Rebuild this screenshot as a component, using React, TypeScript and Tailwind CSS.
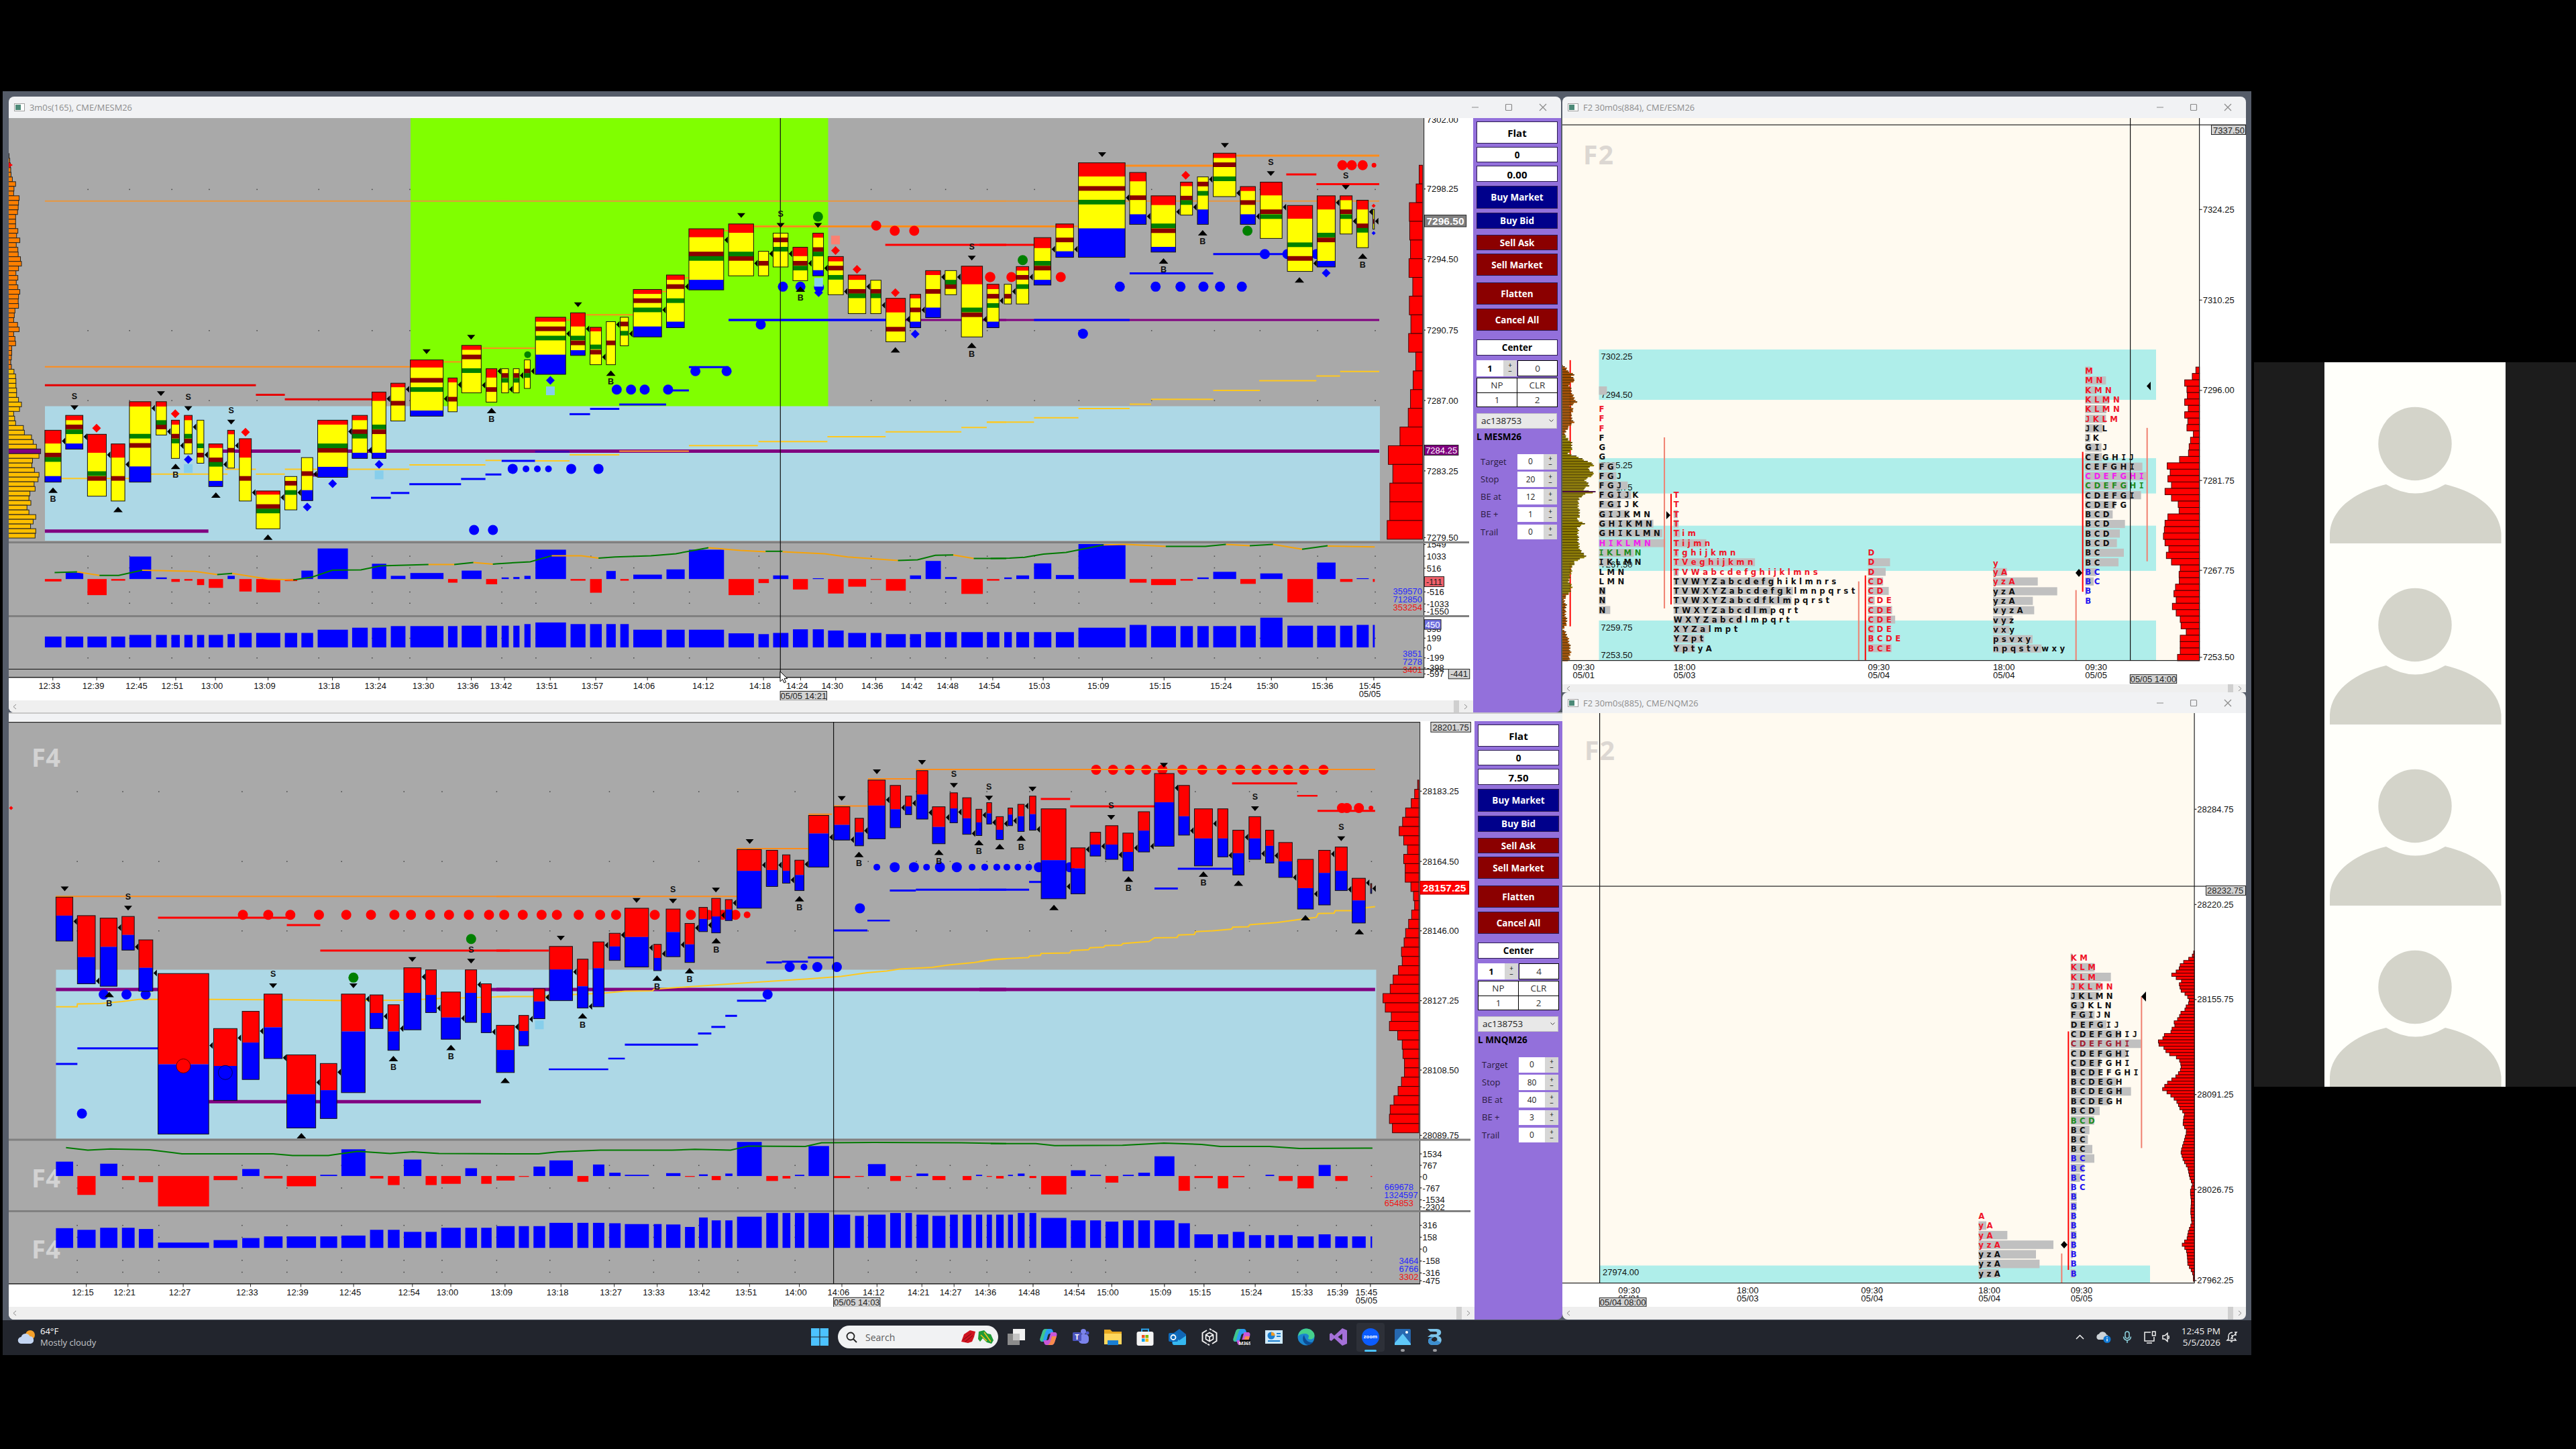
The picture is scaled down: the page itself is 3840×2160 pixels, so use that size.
import React from 'react'

interface Frame {
  x0: number
  y0: number
  kx: number
  ky: number
}

// every series is stored in the units of its own strip, these bring it to screen pixels
const A: Frame = { x0: 0, y0: 130, kx: 2.0632, ky: 1.6681 }
const B: Frame = { x0: 740, y0: 130, kx: 2.0632, ky: 1.6681 }
const C: Frame = { x0: 1460, y0: 130, kx: 1.7818, ky: 1.6681 }
const D: Frame = { x0: 0, y0: 1060, kx: 2.0632, ky: 1.6333 }
const E: Frame = { x0: 740, y0: 1060, kx: 2.0632, ky: 1.6333 }
const F: Frame = { x0: 1460, y0: 1060, kx: 1.7818, ky: 1.6333 }
const G: Frame = { x0: 2320, y0: 130, kx: 2.6133, ky: 1.686 }
const H: Frame = { x0: 2860, y0: 500, kx: 3, ky: 2.8 }
const I: Frame = { x0: 2860, y0: 1380, kx: 3, ky: 2.45 }

const px = (f: Frame, v: number) => f.x0 + v / f.kx
const py = (f: Frame, v: number) => f.y0 + v / f.ky

const SANS = '"Liberation Sans", Arial, sans-serif'
const UI = '"Open Sans", "Noto Sans", sans-serif'

/* ---------- drawing primitives ---------- */

const Box = ({ f, x1, x2, y1, y2, fill, stroke }: any) => (
  <rect
    x={px(f, x1)}
    y={py(f, Math.min(y1, y2))}
    width={(x2 - x1) / f.kx}
    height={Math.abs(y2 - y1) / f.ky}
    fill={fill}
    stroke={stroke}
    strokeWidth={stroke ? 1 : 0}
  />
)

// x1, x2, y, colour, width
type Level = [number, number, number, string, number?]

const Levels = ({ f, data }: { f: Frame; data: Level[] }) => (
  <>
    {data.map(([x1, x2, y, c, w = 2], i) => (
      <line key={i} x1={px(f, x1)} x2={px(f, x2)} y1={py(f, y)} y2={py(f, y)} stroke={c} strokeWidth={w} />
    ))}
  </>
)

const Poly = ({ f, pts, color }: { f: Frame; pts: number[]; color: string }) => {
  const out: string[] = []
  for (let i = 0; i < pts.length; i += 2) out.push(px(f, pts[i]).toFixed(1) + ',' + py(f, pts[i + 1]).toFixed(1))
  return <polyline points={out.join(' ')} fill="none" stroke={color} strokeWidth={2} />
}

const Label = ({ f, x, y, children, size = 13, fill = '#111', anchor = 'start', bold }: any) => (
  <text
    x={px(f, x)}
    y={py(f, y) + size * 0.36}
    fontSize={size}
    fill={fill}
    textAnchor={anchor}
    fontWeight={bold ? 700 : 400}
    fontFamily={SANS}
  >
    {children}
  </text>
)

const Tag = ({ f, x1, x2, y1, y2, fill, color = '#222', stroke = '#222', size = 13, bold, children }: any) => (
  <>
    <Box f={f} x1={x1} x2={x2} y1={y1} y2={y2} fill={fill} stroke={stroke} />
    <Label f={f} x={(x1 + x2) / 2} y={(y1 + y2) / 2} size={size} fill={color} bold={bold} anchor="middle">
      {children}
    </Label>
  </>
)

const Arrow = ({ x, y }: { x: number; y: number }) => (
  <polygon points={`${x},${y} ${x + 5},${y - 5} ${x + 5},${y + 5}`} fill="#000" />
)

// d = down triangle, u = up triangle; a letter after it adds the S / B text
type Mark = [string, number, number]

const Marks = ({ f, data }: { f: Frame; data: Mark[] }) => (
  <>
    {data.map(([kind, x, y], i) => {
      const cx = px(f, x)
      const cy = py(f, y)
      const k = kind[0]
      if (k === 'd')
        return (
          <g key={i}>
            <polygon points={`${cx - 6},${cy - 3} ${cx + 6},${cy - 3} ${cx},${cy + 4}`} />
            {kind[1] && <Label f={f} x={x} y={y - 28} size={12.5} bold anchor="middle">S</Label>}
          </g>
        )
      if (k === 'u')
        return (
          <g key={i}>
            <polygon points={`${cx - 7},${cy + 4} ${cx + 7},${cy + 4} ${cx},${cy - 4}`} />
            {kind[1] && <Label f={f} x={x} y={y + 21} size={12.5} bold anchor="middle">B</Label>}
          </g>
        )
      const c = { r: '#f00', b: '#00f', g: '#008000', l: '#87ceeb', s: '#fa8072' }[kind[1]]
      if (k === 'q') return <rect key={i} x={cx - 6.5} y={cy - 6.5} width={13} height={13} fill={c} />
      if (k === 'm' || k === 'n') {
        const s = k === 'm' ? 6.5 : 3
        return <polygon key={i} points={`${cx - s},${cy} ${cx},${cy - s} ${cx + s},${cy} ${cx},${cy + s}`} fill={c} />
      }
      return <circle key={i} cx={cx} cy={cy} r={k === 'c' ? 7.5 : k === 'e' ? 5 : 3.5} fill={c} />
    })}
  </>
)

const circles = (kind: string, y: number, xs: number[]): Mark[] => xs.map((x) => [kind, x, y])

const Dots = ({ f, xs, ys }: { f: Frame; xs: number[]; ys: number[] }) => (
  <>
    {xs.map((x) => ys.map((y) => <rect key={x + '-' + y} x={px(f, x)} y={py(f, y)} width={1.5} height={1.5} fill="#444" />))}
  </>
)

const Times = ({ f, y, tick, data }: { f: Frame; y: number; tick: number; data: [string, number][] }) => (
  <>
    {data.map(([t, x]) => (
      <g key={t}>
        <Label f={f} x={x} y={y} anchor="middle">
          {t}
        </Label>
        <Box f={f} x1={x + 9.5} x2={x + 11.5} y1={tick} y2={tick + 8} fill="#222" />
      </g>
    ))}
  </>
)

/* ---------- MESM26 ---------- */

// x1, x2, high, low, red end, green, dark red, blue start, close, delta, volume
const MES: [Frame, number[][]][] = [
  [A, [
    [138, 188, 853, 982, 886, 920, 909, 967, 880, 1229, 1366],
    [202, 255, 816, 900, 828, 851, 839, 886, 869, 1207, 1366],
    [269, 327, 863, 1017, 909, 955, 967, 0, 914, 1263, 1366],
    [342, 384, 887, 1029, 921, 0, 967, 0, 938, 1227, 1366],
    [398, 464, 782, 982, 794, 862, 885, 943, 798, 1167, 1362],
    [480, 512, 782, 865, 794, 828, 839, 0, 856, 1219, 1362],
    [527, 552, 828, 923, 839, 874, 862, 0, 891, 1230, 1362],
    [567, 591, 816, 912, 828, 862, 874, 0, 845, 1227, 1362],
    [606, 627, 828, 935, 0, 886, 909, 0, 914, 1238, 1362],
    [642, 685, 887, 993, 897, 932, 921, 979, 938, 1245, 1362],
    [700, 721, 853, 947, 863, 0, 897, 0, 891, 1215, 1360],
    [736, 773, 874, 1029, 921, 0, 967, 0, 1008, 1254, 1357],
    [788, 861, 1004, 1098, 1013, 1048, 1037, 0, 1020, 1256, 1357],
    [876, 913, 968, 1051, 0, 1002, 979, 0, 1008, 1228, 1357],
    [927, 962, 921, 1028, 0, 0, 955, 1002, 962, 1202, 1357],
    [977, 1069, 828, 970, 839, 886, 897, 944, 856, 1147, 1349],
    [1083, 1130, 816, 923, 828, 862, 851, 909, 903, 0, 1344],
    [1144, 1187, 758, 923, 780, 839, 851, 909, 775, 1185, 1344],
    [1202, 1246, 736, 830, 746, 0, 780, 0, 751, 1215, 1340],
    [1262, 1363, 678, 818, 697, 746, 723, 804, 775, 1208, 1340],
    [1378, 1406, 723, 807, 734, 0, 770, 0, 740, 1232, 1340],
    [1420, 1480, 642, 760, 653, 699, 665, 0, 741, 1202, 1339],
    [1495, 1528, 700, 783, 722, 0, 746, 0, 706, 1236, 1339],
  ]],
  [B, [
    [16, 37, 700, 760, 0, 723, 711, 0, 751, 1219, 1339],
    [52, 70, 700, 760, 0, 723, 711, 0, 717, 1218, 1339],
    [86, 104, 678, 749, 0, 711, 700, 0, 706, 1215, 1335],
    [120, 213, 572, 714, 583, 618, 595, 665, 613, 1150, 1331],
    [228, 273, 561, 667, 595, 618, 630, 654, 601, 1227, 1335],
    [288, 323, 597, 690, 607, 640, 653, 0, 671, 1257, 1335],
    [338, 366, 583, 690, 0, 0, 630, 0, 590, 1203, 1335],
    [381, 406, 572, 643, 0, 606, 583, 0, 613, 1227, 1335],
    [421, 508, 503, 621, 514, 548, 525, 595, 554, 1212, 1349],
    [523, 578, 467, 598, 479, 525, 490, 583, 496, 1199, 1349],
    [592, 699, 352, 504, 373, 420, 409, 479, 380, 1150, 1349],
    [714, 791, 340, 469, 362, 409, 420, 0, 438, 1263, 1358],
    [806, 837, 408, 469, 0, 0, 432, 0, 414, 1233, 1360],
    [851, 897, 363, 447, 0, 397, 374, 0, 414, 1214, 1357],
    [912, 957, 398, 481, 420, 444, 432, 0, 438, 1249, 1348],
    [973, 1006, 363, 469, 374, 409, 398, 455, 450, 1221, 1348],
    [1020, 1067, 421, 516, 433, 467, 444, 0, 508, 1259, 1351],
    [1082, 1136, 467, 563, 479, 513, 502, 0, 496, 1242, 1357],
    [1151, 1183, 480, 563, 0, 513, 502, 0, 542, 1225, 1357],
    [1198, 1258, 525, 633, 560, 0, 596, 0, 577, 1252, 1360],
    [1272, 1305, 515, 598, 525, 0, 548, 583, 554, 1214, 1360],
    [1320, 1366, 456, 573, 467, 0, 502, 548, 472, 1178, 1355],
    [1380, 1415, 456, 516, 0, 479, 490, 0, 472, 1218, 1355],
    [1430, 1495, 445, 621, 490, 548, 560, 0, 577, 1260, 1355],
  ]],
  [C, [
    [20, 52, 490, 598, 502, 537, 514, 583, 531, 1227, 1355],
    [66, 85, 490, 539, 0, 0, 514, 0, 508, 1219, 1355],
    [98, 131, 446, 539, 456, 490, 467, 0, 472, 1214, 1355],
    [145, 190, 374, 492, 400, 432, 444, 479, 403, 1184, 1355],
    [203, 250, 340, 423, 350, 0, 374, 408, 403, 1213, 1355],
    [263, 387, 188, 423, 222, 280, 246, 351, 275, 1136, 1344],
    [399, 443, 212, 341, 234, 0, 269, 316, 321, 1232, 1337],
    [456, 521, 270, 410, 293, 339, 351, 397, 310, 1238, 1340],
    [534, 566, 236, 318, 246, 281, 270, 0, 298, 1227, 1340],
    [579, 608, 223, 341, 0, 258, 235, 304, 229, 1219, 1340],
    [621, 681, 164, 272, 176, 222, 187, 0, 263, 1205, 1340],
    [693, 733, 247, 341, 258, 0, 281, 316, 321, 1235, 1339],
    [746, 804, 236, 376, 269, 316, 304, 0, 298, 1209, 1319],
    [818, 885, 294, 458, 327, 386, 420, 0, 438, 1281, 1339],
    [897, 945, 270, 447, 304, 362, 374, 432, 287, 1182, 1339],
    [958, 990, 270, 365, 281, 316, 304, 0, 333, 1230, 1339],
    [1002, 1033, 281, 399, 304, 350, 339, 0, 310, 1221, 1337],
    [1045, 1049, 304, 353, 0, 0, 328, 0, 333, 1230, 1337],
  ]],
]

const OR = '#ff8c1a'
const YE = '#ffc81e'
const PU = '#800080'

const MES_LEVELS: [Frame, Level[]][] = [
  [A, [
    [138, 1568, 283, '#e8973f'], [138, 1262, 695, OR], [1363, 1420, 683, OR], [1480, 1568, 649, OR],
    [138, 787, 741, '#e60000', 3], [787, 876, 765, '#e60000', 3], [876, 1144, 776, '#e60000', 3],
    [685, 924, 905, PU, 5], [955, 977, 964, PU, 5], [1069, 1568, 905, PU, 5], [138, 641, 1104, PU, 5],
    [138, 398, 973, YE], [464, 700, 962, YE], [693, 787, 950, YE], [787, 876, 962, YE], [876, 1259, 950, YE],
    [1259, 1493, 939, YE], [1493, 1542, 928, YE],
    [1141, 1202, 1021, '#00f', 3], [1202, 1259, 1009, '#00f', 3], [1259, 1418, 987, '#00f', 3],
    [1418, 1493, 974, '#00f', 3], [1493, 1542, 963, '#00f', 3],
  ]],
  [B, [
    [0, 1568, 283, '#e8973f'], [0, 1568, 905, PU, 5], [119, 225, 906, '#3a00b0', 3],
    [16, 119, 929, '#00f', 3], [119, 225, 929, YE], [225, 378, 914, YE], [378, 592, 905, '#ff9f30'],
    [592, 804, 891, YE], [806, 1018, 881, YE], [1018, 1197, 869, YE], [1197, 1430, 857, YE], [1430, 1508, 846, YE], [1508, 1568, 833, YE],
    [225, 288, 813, '#00f', 3], [288, 378, 800, '#00f', 3], [378, 522, 789, '#00f', 3], [522, 592, 754, '#00f', 3],
    [592, 714, 696, '#00f', 3], [714, 1198, 579, '#00f', 3.5], [1198, 1568, 579, PU, 3],
    [0, 120, 649, OR], [213, 228, 579, OR], [273, 421, 566, OR], [508, 523, 508, OR], [578, 592, 474, OR], [699, 714, 357, OR],
    [791, 1568, 346, OR, 3], [1196, 1568, 392, '#f00', 3],
  ]],
  [C, [
    [0, 1062, 283, '#e8973f'], [0, 1062, 905, PU, 5], [0, 1062, 579, PU, 3], [145, 399, 579, '#00f', 3],
    [0, 203, 346, OR, 3], [250, 263, 346, OR], [387, 621, 195, OR, 3], [681, 1062, 170, OR, 3],
    [0, 145, 392, '#f00', 3], [815, 895, 217, '#f00', 3], [895, 1062, 241, '#f00', 3],
    [399, 621, 463, '#00f', 3], [621, 897, 415, '#00f', 3],
    [20, 145, 833, YE], [145, 263, 822, YE], [263, 399, 799, YE], [399, 456, 788, YE], [456, 621, 776, YE],
    [621, 745, 754, YE], [743, 895, 730, YE], [895, 958, 718, YE], [958, 1062, 707, YE],
  ]],
]

const MES_MARKS: [Frame, Mark[]][] = [
  [A, [
    ['dS', 229, 796], ['d', 495, 761], ['dS', 579, 798], ['dS', 711, 832], ['d', 1312, 657], ['d', 1449, 621],
    ['uB', 163, 1002], ['u', 363, 1050], ['uB', 540, 943], ['u', 664, 1014], ['u', 824, 1119], ['uB', 1512, 804],
    ['mr', 297, 848], ['mr', 539, 812], ['mr', 755, 858], ['mb', 579, 926], ['mb', 945, 1044], ['mb', 1023, 986], ['mb', 1166, 938],
    ['ql', 579, 948], ['ql', 1166, 964], ...circles('cb', 1101, [1458, 1516]),
  ]],
  [B, [
    ['cb', 881, 496], ['cb', 935, 496], ['cb', 992, 497],
    ['d', 251, 540], ['d', 753, 318], ['dS', 874, 343], ['d', 989, 343], ['dS', 1462, 424],
    ['uB', 352, 711], ['uB', 935, 502], ['u', 1227, 653], ['uB', 1462, 642],
    ['mb', 166, 729], ['ql', 166, 755], ['mb', 991, 511], ['ql', 991, 485], ['mr', 1043, 406], ['qs', 1043, 380],
    ['mr', 1109, 453], ['mr', 1227, 511], ['mb', 1288, 614],
    ...circles('cb', 949, [50, 230, 314]), ...circles('eb', 949, [91, 126, 160]), ...circles('cb', 752, [370, 414, 456, 528]),
    ...circles('cb', 706, [612, 708]), ['cb', 813, 590], ['eg', 96, 665], ['cg', 989, 322],
    ['cr', 1168, 344], ['cr', 1225, 357], ['cr', 1285, 357], ['cr', 1518, 472],
  ]],
  [C, [
    ['d', 326, 167], ['d', 652, 144], ['dS', 774, 214], ['dS', 973, 248],
    ['uB', 489, 432], ['uB', 593, 362], ['u', 850, 479], ['uB', 1018, 420],
    ['mr', 548, 219], ['mb', 921, 462], ['nr', 1047, 295], ['nb', 1047, 363],
    ...circles('cr', 472, [29, 216]), ...circles('cr', 194, [964, 989, 1018]), ['tr', 1048, 194],
    ['cg', 115, 430], ['cg', 712, 357], ...circles('cb', 496, [373, 468, 534, 595, 639, 697]), ['cb', 275, 613],
  ]],
]

const MES_LEFT = [
  28, 30, 32, 33, 34, 38, 48, 43, 42, 59, 57, 56, 54, 48, 48, 48, 55, 51, 61, 50, 55, 56, 63, 66, 57, 49, 55, 50, 55, 61,
  57, 56, 57, 46, 44, 42, 54, 59, 42, 46, 48, 36, 36, 35, 33, 35, 43, 48, 49, 49, 51, 51, 57, 66, 60, 42, 45, 48, 72, 75,
  97, 102, 112, 125, 120, 100, 98, 106, 120, 117, 105, 108, 92, 89, 95, 83, 89, 110, 102, 94, 110, 108,
]

const MES_RIGHT = [
  1168, 1160, 1142, 1143, 1145, 1141, 1151, 1142, 1146, 1140, 1159, 1152, 1145, 1139, 1117, 1086, 1098, 1090, 1090, 1083,
]

const GR = '#007a00'
const OL = '#f5a30a'
const MES_CUM: [Frame, string, number[]][] = [
  [A, GR, [168, 1207, 237, 1205]],
  [A, OL, [237, 1205, 306, 1214]],
  [A, GR, [306, 1214, 365, 1214, 437, 1201]],
  [A, OL, [437, 1201, 600, 1204, 668, 1212]],
  [A, GR, [668, 1212, 714, 1209]],
  [A, OL, [714, 1209, 824, 1223, 902, 1225]],
  [A, GR, [902, 1225, 960, 1218, 1022, 1201, 1110, 1200, 1170, 1190, 1318, 1187]],
  [A, OL, [1318, 1187, 1397, 1187]],
  [A, GR, [1397, 1187, 1456, 1182]],
  [A, OL, [1456, 1182, 1516, 1186]],
  [B, GR, [-11, 1186, 0, 1185, 104, 1180, 170, 1165]],
  [B, OL, [170, 1165, 262, 1165, 314, 1171]],
  [B, GR, [314, 1171, 365, 1168, 475, 1165, 552, 1160, 652, 1145]],
  [B, OL, [652, 1145, 750, 1152, 828, 1155]],
  [B, GR, [828, 1154, 880, 1154]],
  [B, OL, [880, 1155, 1010, 1160, 1080, 1168, 1235, 1177]],
  [B, GR, [1235, 1177, 1295, 1175, 1350, 1164, 1405, 1163]],
  [B, OL, [1405, 1163, 1468, 1172]],
  [B, GR, [1468, 1172, 1568, 1172]],
  [C, GR, [30, 1172, 80, 1171, 120, 1169, 170, 1161, 230, 1157, 330, 1138]],
  [C, OL, [330, 1138, 390, 1137, 495, 1142]],
  [C, GR, [495, 1142, 600, 1142, 655, 1137]],
  [C, OL, [655, 1137, 718, 1140]],
  [C, GR, [718, 1140, 780, 1137]],
  [C, OL, [780, 1137, 857, 1149]],
  [C, GR, [857, 1149, 925, 1140]],
  [C, OL, [925, 1141, 1050, 1143]],
]

const MesChart = () => (
  <svg width={2183} height={868} viewBox="13 176 2183 868" className="block">
    <rect x={13} y={176} width={2109} height={834} fill="#a9a9a9" />
    <rect x={612} y={176} width={622.5} height={430} fill="#80ff00" />
    <rect x={67} y={605.5} width={1990} height={200.5} fill="#add8e6" />
    <Dots f={A} xs={[269, 397, 527, 642, 789, 979, 1143, 1259]} ys={[253, 604, 778, 1165, 1194, 1254, 1282, 1369, 1418]} />
    <Dots f={B} xs={[15, 120, 289, 421, 592, 806]} ys={[1165, 1194, 1254, 1282, 1369, 1418]} />
    <Dots f={B} xs={[1151, 1271, 1380, 1508]} ys={[253, 604, 778, 1165, 1194, 1254, 1282, 1369, 1418]} />
    <Dots f={C} xs={[145, 263, 456, 623, 744, 897, 1050]} ys={[253, 604, 778, 1165, 1194, 1254, 1282, 1369, 1418]} />

    {MES_LEFT.map((e, i) => (
      <Box key={i} f={A} x1={24} x2={e} y1={165 + i * 11.66} y2={176.6 + i * 11.66}
        fill={i === 63 ? PU : i < 46 ? '#ff7f00' : '#ffbf00'} stroke="#222" />
    ))}
    <polygon points="13,242 19,246 13,250" fill="#f00" />
    {MES_RIGHT.map((s, i) => (
      <Box key={i} f={C} x1={s} x2={1177} y1={194 + i * 46.5} y2={240.5 + i * 46.5} fill="#f00" stroke="#400" />
    ))}
    {MES_LEVELS.map(([f, data], i) => (
      <Levels key={i} f={f} data={data} />
    ))}
    <Marks f={C} data={[...circles('cb', 415, [758, 818, 895]), ['cr', 85, 472]]} />
    {MES.map(([f, rows]) =>
      rows.map(([x1, x2, hi, lo, red, green, dark, blue, close, delta, vol]) => (
        <g key={f.x0 + '-' + x1}>
          <Box f={f} x1={x1} x2={x2} y1={hi} y2={lo} fill="#ff0" />
          {red > 0 && <Box f={f} x1={x1} x2={x2} y1={hi} y2={red} fill="#f00" />}
          {dark > 0 && <Box f={f} x1={x1} x2={x2} y1={dark} y2={dark + 11.5} fill="#8b0000" />}
          {green > 0 && <Box f={f} x1={x1} x2={x2} y1={green} y2={green + 11.5} fill="#008000" />}
          {blue > 0 && <Box f={f} x1={x1} x2={x2} y1={blue} y2={lo} fill="#00f" />}
          <Box f={f} x1={x1} x2={x2} y1={hi} y2={lo} fill="none" stroke="#111" />
          <Arrow x={px(f, x2) + 1} y={py(f, close)} />
          {delta > 0 && <Box f={f} x1={x1} x2={x2 + 1} y1={1223} y2={delta} fill={delta > 1223 ? '#f00' : '#00f'} />}
          <Box f={f} x1={x1} x2={x2 + 1} y1={vol} y2={1393} fill="#00f" />
        </g>
      ))
    )}
    {MES_MARKS.map(([f, data], i) => (
      <Marks key={i} f={f} data={data} />
    ))}
    {MES_CUM.map(([f, c, pts], i) => (
      <Poly key={i} f={f} pts={pts} color={c} />
    ))}

    {/* axes */}
    <rect x={2123} y={176} width={73} height={868} fill="#fff" />
    <rect x={13} y={1010} width={2183} height={34} fill="#fff" />
    <rect x={2122} y={176} width={1.2} height={834} fill="#333" />
    <rect x={13} y={1009} width={2110} height={1.5} fill="#222" />
    <Label f={C} x={1188} y={80}>7302.00</Label>
    {[['7298.25', 253], ['7294.50', 428], ['7290.75', 604], ['7287.00', 779], ['7283.25', 954], ['7279.50', 1120],
      ['1549', 1137], ['1033', 1166], ['516', 1196], ['-516', 1255], ['-1033', 1285], ['-1550', 1304],
      ['398', 1347], ['199', 1370], ['0', 1394], ['-199', 1419], ['-398', 1444], ['-597', 1459]].map(([t, y]) => (
      <g key={t}>
        <Label f={C} x={1188} y={y}>{t}</Label>
        <Box f={C} x1={1181} x2={1185} y1={Number(y) - 1} y2={Number(y) + 1} fill="#222" />
      </g>
    ))}
    <rect x={13} y={807} width={2177} height={3} fill="#808080" />
    <rect x={13} y={917} width={2177} height={3} fill="#808080" />
    <Tag f={C} x1={1182} x2={1293} y1={318} y2={347} fill="#808080" color="#fff" size={15.5} bold>7296.50</Tag>
    <Tag f={C} x1={1182} x2={1272} y1={890} y2={915} fill={PU} color="#fff">7284.25</Tag>
    <Tag f={C} x1={1182} x2={1234} y1={1217} y2={1242} fill="#f0606a">-111</Tag>
    <Tag f={C} x1={1182} x2={1226} y1={1324} y2={1348} fill="#7070e0" color="#fff">450</Tag>
    {[['359570', 1254, '#2828ff'], ['712850', 1274, '#2828ff'], ['353254', 1294, '#f01414'], ['3851', 1409, '#2828ff'], ['7278', 1429, '#2828ff'], ['3401', 1449, '#f01414']].map(([t, y, c]) => (
      <Label key={t} f={C} x={1176} y={y} fill={c} anchor="end">{t}</Label>
    ))}
    <rect x={13} y={997} width={2146} height={1} fill="#111" />
    <Tag f={C} x1={1246} x2={1302} y1={1447} y2={1471} fill="#d3d3d3">-441</Tag>
    <Times f={A} y={1488} tick={1467} data={[['12:33', 152], ['12:39', 287], ['12:45', 420], ['12:51', 530], ['13:00', 652], ['13:09', 814], ['13:18', 1012], ['13:24', 1155], ['13:30', 1302], ['13:36', 1439], ['13:42', 1541]]} />
    <Times f={B} y={1488} tick={1467} data={[['13:51', 155], ['13:57', 295], ['14:06', 454], ['14:12', 636], ['14:18', 811], ['14:24', 925], ['14:30', 1033], ['14:36', 1156], ['14:42', 1277], ['14:48', 1388], ['14:54', 1516]]} />
    <Times f={C} y={1488} tick={1467} data={[['15:03', 159], ['15:09', 316], ['15:15', 480], ['15:24', 642], ['15:30', 765], ['15:36', 911], ['15:45', 1037]]} />
    <Label f={C} x={1037} y={1508} anchor="middle">05/05</Label>
    <rect x={1162.7} y={176} width={1.2} height={834} fill="#111" />
    <Tag f={B} x1={873} x2={1016} y1={1502} y2={1525} fill="#d3d3d3">05/05 14:21</Tag>
    <path d="M1163 1001v15l3.600-3.300 2.300 5.200 2.600-1.100-2.300-5.200h4.600z" fill="#fff" stroke="#000" />
  </svg>
)

/* ---------- MNQM26 ---------- */

// x1, x2, high, low, split, close, delta, volume
const MNQ: [Frame, number[][]][] = [
  [D, [
    [172, 224, 453, 560, 498, 512, 1097, 1259], [238, 293, 498, 664, 599, 657, 1178, 1263],
    [308, 360, 504, 670, 574, 527, 1102, 1258], [375, 413, 500, 582, 545, 574, 1142, 1258],
    [427, 470, 557, 682, 625, 638, 1147, 1261], [486, 642, 639, 1030, 860, 814, 1206, 1294],
    [657, 729, 773, 948, 864, 796, 1142, 1288], [745, 797, 731, 897, 807, 779, 1115, 1283],
    [812, 868, 689, 846, 770, 844, 1138, 1279], [882, 971, 837, 1015, 933, 904, 1157, 1279],
    [985, 1036, 858, 992, 923, 879, 1129, 1279], [1050, 1123, 689, 929, 780, 701, 1067, 1277],
    [1138, 1178, 691, 773, 735, 743, 1138, 1263], [1193, 1228, 715, 826, 780, 773, 1154, 1263],
    [1242, 1295, 625, 776, 686, 647, 1092, 1268], [1309, 1342, 630, 734, 691, 723, 1154, 1268],
    [1357, 1416, 684, 799, 746, 748, 1151, 1258], [1431, 1466, 630, 758, 686, 666, 1113, 1258],
    [1480, 1511, 664, 783, 735, 781, 1151, 1258],
  ]],
  [E, [
    [0, 55, 765, 880, 825, 769, 1143, 1254], [69, 99, 741, 815, 779, 750, 1134, 1254],
    [114, 149, 676, 749, 707, 697, 1109, 1254], [163, 234, 573, 705, 629, 635, 1094, 1246],
    [249, 282, 604, 723, 670, 719, 1146, 1246], [297, 331, 562, 720, 626, 570, 1104, 1246],
    [347, 381, 541, 607, 573, 545, 1124, 1247], [395, 468, 480, 623, 550, 576, 1129, 1249],
    [484, 507, 568, 632, 601, 591, 0, 1249], [522, 565, 482, 598, 538, 569, 1125, 1250],
    [580, 609, 517, 612, 568, 528, 1134, 1256], [623, 649, 478, 537, 506, 521, 1128, 1233],
    [662, 689, 456, 540, 500, 497, 1142, 1240], [704, 725, 459, 510, 483, 467, 1126, 1240],
    [740, 815, 337, 480, 389, 375, 1049, 1231], [830, 865, 339, 427, 387, 375, 1144, 1222],
    [880, 903, 350, 419, 389, 411, 1138, 1222], [918, 946, 363, 437, 399, 373, 1129, 1222],
    [960, 1022, 254, 380, 298, 307, 1059, 1222], [1038, 1087, 233, 314, 277, 313, 1137, 1226],
    [1103, 1129, 261, 328, 295, 291, 1134, 1229], [1143, 1196, 168, 311, 230, 216, 1103, 1226],
    [1211, 1243, 181, 284, 239, 235, 1144, 1222], [1258, 1277, 207, 252, 232, 224, 1134, 1222],
    [1292, 1327, 145, 263, 203, 247, 1126, 1226], [1341, 1380, 233, 323, 282, 259, 1142, 1229],
    [1395, 1418, 199, 272, 237, 246, 0, 1226], [1434, 1460, 211, 300, 261, 298, 1142, 1226],
    [1475, 1493, 239, 303, 271, 253, 1129, 1226], [1508, 1523, 223, 275, 249, 271, 1134, 1226],
    [1537, 1559, 257, 313, 289, 274, 1138, 1226],
  ]],
  [F, [
    [76, 88, 236, 279, 252, 267, 1129, 1226], [102, 119, 227, 293, 256, 231, 1126, 1222],
    [133, 150, 207, 290, 251, 288, 1137, 1222], [164, 230, 238, 457, 363, 427, 1177, 1234],
    [243, 281, 333, 445, 383, 337, 1118, 1240], [294, 322, 295, 353, 325, 329, 1129, 1240],
    [335, 368, 279, 361, 325, 350, 1148, 1243], [381, 409, 297, 389, 343, 333, 1129, 1240],
    [422, 452, 245, 343, 291, 329, 1124, 1240], [465, 517, 152, 329, 222, 187, 1084, 1240],
    [529, 558, 181, 302, 256, 291, 1168, 1247], [571, 619, 238, 377, 310, 274, 1137, 1274],
    [633, 660, 238, 355, 310, 351, 1162, 1274], [673, 703, 290, 399, 346, 307, 1135, 1268],
    [716, 747, 257, 361, 310, 347, 0, 1276], [760, 782, 290, 370, 328, 352, 1129, 1276],
    [795, 831, 320, 405, 366, 405, 1144, 1276], [845, 887, 361, 482, 431, 445, 1162, 1279],
    [901, 932, 339, 472, 394, 348, 1105, 1274], [945, 977, 331, 437, 389, 434, 1144, 1279],
    [990, 1025, 407, 516, 461, 418, 0, 1279], [1039, 1042, 420, 444, 432, 432, 1134, 1279],
  ]],
]

const MNQ_LEVELS: [Frame, Level[]][] = [
  [D, [
    [172, 1568, 451, OR], [486, 893, 503, '#f00', 3], [882, 985, 521, '#f00', 3], [985, 1568, 583, '#f00', 3],
    [172, 486, 678, PU, 5], [1511, 1568, 678, PU, 5], [642, 1479, 951, PU, 5],
    [172, 238, 859, '#00f', 3], [238, 486, 821, '#00f', 3],
  ]],
  [E, [
    [0, 740, 451, OR], [0, 161, 583, '#f00', 3], [0, 1568, 678, PU, 5],
    [161, 344, 872, '#00f', 2.5], [344, 395, 846, '#00f', 2.5], [395, 620, 812, '#00f', 3], [620, 661, 785, '#00f', 3],
    [661, 704, 769, '#00f', 3], [704, 740, 742, '#00f', 3], [740, 830, 705, '#00f', 3], [830, 878, 612, '#00f', 3],
    [878, 958, 610, '#00f', 3], [958, 1038, 600, '#00f', 3], [1038, 1141, 534, '#00f', 3], [1141, 1210, 510, '#00f', 2.5],
    [1210, 1290, 437, '#00f', 3], [1290, 1568, 435, '#00f', 3],
    [740, 958, 335, OR], [960, 1032, 251, OR], [1038, 1140, 231, OR], [1143, 1290, 165, OR], [1290, 1568, 142, OR],
  ]],
  [F, [
    [0, 1051, 678, PU, 5], [0, 1051, 142, OR], [0, 132, 435, '#00f', 3], [132, 164, 416, '#00f', 3],
    [465, 527, 432, '#00f', 3], [527, 671, 384, '#00f', 3],
    [163, 241, 214, '#f00', 3], [241, 465, 232, '#f00', 3], [671, 844, 176, '#f00', 3], [844, 898, 206, '#f00', 2.5], [898, 1051, 243, '#f00', 3],
  ]],
]

// drawn under the candles
const MNQ_BACK: [Frame, Mark[]][] = [
  [D, [...circles('cb', 690, [319, 389, 448]), ['cb', 252, 980], ['nr', 34, 236],
    ...circles('cr', 496, [747, 825, 893, 981, 1065, 1141, 1213, 1264, 1323, 1381, 1442, 1504])]],
  [E, [...circles('cr', 496, [24, 81, 139, 186, 253, 319, 368, 487, 598, 652, 695, 735]), ['er', 771, 496],
    ['cb', 834, 690], ...circles('cb', 623, [902, 987, 1047]), ['eb', 946, 623], ['cb', 1118, 480],
    ...circles('cb', 380, [1225, 1284, 1364, 1416]), ...circles('eb', 380, [1170, 1323, 1463, 1502, 1539])]],
  [F, [...circles('eb', 380, [14, 46, 73, 102, 131]), ...circles('cb', 380, [158, 240]),
    ...circles('cr', 143, [310, 355, 399, 443, 486, 539, 592, 644, 693, 736, 780, 820, 862, 914]),
    ...circles('cr', 236, [963, 976, 1008]), ['tr', 1040, 236]]],
]

const MNQ_MARKS: [Frame, Mark[]][] = [
  [D, [
    ['d', 199, 432], ['dS', 394, 479], ['dS', 840, 668], ['d', 1087, 668], ['d', 1268, 604], ['dS', 1449, 608],
    ['uB', 336, 690], ['u', 927, 1034], ['uB', 1210, 846], ['uB', 1387, 819], ['cg', 1087, 649], ['cg', 1449, 555],
  ]],
  [E, [
    ['u', 27, 899], ['d', 198, 552], ['d', 431, 460], ['dS', 543, 462], ['d', 675, 435], ['d', 779, 317], ['d', 1062, 212],
    ['d', 1170, 147], ['d', 1309, 124], ['dS', 1407, 180], ['dS', 1515, 211],
    ['uB', 265, 742], ['uB', 494, 650], ['uB', 594, 632], ['uB', 676, 559], ['uB', 932, 457], ['uB', 1115, 349],
    ['uB', 1361, 344], ['uB', 1484, 320], ['u', 1548, 330], ['ql', 132, 764],
  ]],
  [F, [
    ['d', 141, 189], ['dS', 350, 258], ['d', 490, 131], ['dS', 732, 237], ['dS', 961, 310],
    ['uB', 111, 309], ['u', 198, 478], ['uB', 396, 409], ['uB', 595, 397], ['u', 688, 419], ['u', 866, 503], ['u', 1009, 537],
  ]],
]

const MNQ_RIGHT = [
  1164, 1156, 1147, 1132, 1124, 1115, 1127, 1137, 1127, 1131, 1131, 1146, 1153, 1156, 1148, 1140, 1132, 1128, 1121, 1123,
  1113, 1099, 1091, 1072, 1078, 1094, 1089, 1111, 1123, 1125, 1129, 1129, 1121, 1112, 1101, 1091, 1089, 1097,
]

const DOT_YS = [195, 365, 534, 1105, 1160, 1251, 1280, 1336, 1365]

const MnqChart = () => (
  <svg width={2185} height={873} viewBox="13 1075 2185 873" className="block">
    <rect x={13} y={1075} width={2185} height={873} fill="#fff" />
    <rect x={13} y={1076} width={2104} height={838} fill="#a9a9a9" />
    <rect x={83.5} y={1445.5} width={1968} height={252} fill="#add8e6" />
    <Dots f={D} xs={[236, 376, 487, 743, 881, 1049, 1241, 1358, 1526]} ys={DOT_YS} />
    <Dots f={E} xs={[163, 346, 482, 621, 741, 917, 1142, 1290, 1394, 1507]} ys={DOT_YS} />
    <Dots f={F} xs={[132, 243, 334, 572, 716, 844, 947, 1040]} ys={DOT_YS} />
    {[136, 1160, 1333].map((y) => (
      <text key={y} x={47} y={py(D, y)} fontSize={38} fontWeight={700} fill="#d3d3d3" fontFamily={UI} textLength={43}>
        F4
      </text>
    ))}
    {MNQ_RIGHT.map((s, i) => (
      <Box key={i} f={F} x1={s} x2={1167} y1={168 + i * 22.6} y2={190.6 + i * 22.6} fill="#f00" stroke="#400" />
    ))}
    {MNQ_LEVELS.map(([f, data], i) => (
      <Levels key={i} f={f} data={data} />
    ))}
    <Poly f={D} color={YE} pts={[172, 720, 237, 720, 238, 713, 308, 712, 375, 707, 427, 702, 640, 702, 900, 703, 1050, 705, 1240, 704, 1350, 700, 1480, 697, 1568, 695]} />
    <Poly f={E} color={YE} pts={[0, 695, 114, 695, 240, 690, 330, 687, 395, 682, 480, 681, 485, 677, 740, 663, 900, 655, 958, 652, 1060, 646, 1140, 637, 1200, 633, 1240, 628, 1340, 624, 1390, 618, 1470, 612, 1520, 606, 1568, 603]} />
    <Poly f={F} color={YE} pts={[0, 609, 40, 604, 130, 600, 134, 596, 162, 595, 164, 590, 240, 589, 243, 583, 290, 581, 294, 576, 330, 575, 334, 571, 377, 570, 381, 566, 450, 561, 465, 552, 525, 551, 529, 545, 571, 544, 574, 537, 620, 535, 670, 531, 673, 526, 714, 525, 718, 520, 790, 515, 845, 508, 895, 502, 900, 493, 942, 492, 945, 486, 1000, 486, 1025, 479, 1051, 476]} />
    {MNQ_BACK.map(([f, data], i) => (
      <Marks key={i} f={f} data={data} />
    ))}
    <Levels f={F} data={[[290, 1051, 142, OR]]} />
    {MNQ.map(([f, rows]) =>
      rows.map(([x1, x2, hi, lo, mid, close, delta, vol]) => (
        <g key={f.x0 + '-' + x1}>
          <Box f={f} x1={x1} x2={x2} y1={hi} y2={mid} fill="#f00" />
          <Box f={f} x1={x1} x2={x2} y1={mid} y2={lo} fill="#00f" />
          <Box f={f} x1={x1} x2={x2} y1={hi} y2={lo} fill="none" stroke="#111" />
          <Arrow x={px(f, x2) + 1} y={py(f, close)} />
          {delta > 0 && <Box f={f} x1={x1} x2={x2 + 1} y1={1132} y2={delta} fill={delta > 1132 ? '#f00' : '#00f'} />}
          <Box f={f} x1={x1} x2={x2 + 1} y1={vol} y2={1307} fill="#00f" />
        </g>
      ))
    )}
    <circle cx={px(D, 564)} cy={py(D, 864)} r={10.5} fill="#f00" stroke="#600" />
    <circle cx={px(D, 693)} cy={py(D, 880)} r={10.5} fill="#00f" stroke="#000060" />
    {MNQ_MARKS.map(([f, data], i) => (
      <Marks key={i} f={f} data={data} />
    ))}
    <Poly f={D} color={GR} pts={[203, 1063, 270, 1069, 340, 1066, 460, 1068, 560, 1078, 840, 1078, 900, 1082, 1010, 1082, 1100, 1072, 1200, 1077, 1270, 1073, 1350, 1077, 1568, 1078]} />
    <Poly f={E} color={GR} pts={[40, 1078, 130, 1078, 190, 1073, 320, 1069, 540, 1069, 610, 1067, 720, 1069, 775, 1059, 950, 1060, 1000, 1051, 1160, 1050, 1430, 1051, 1568, 1053]} />
    <Poly f={F} color={GR} pts={[30, 1053, 150, 1053, 200, 1058, 380, 1057, 490, 1052, 590, 1055, 640, 1060, 770, 1060, 850, 1065, 1044, 1064]} />

    <rect x={13} y={1076} width={2104} height={1.2} fill="#222" />
    <rect x={2116} y={1076} width={1.2} height={838} fill="#333" />
    <rect x={13} y={1913} width={2104} height={1.5} fill="#222" />
    {[['28183.25', 195], ['28164.50', 366], ['28146.00', 535], ['28127.25', 705], ['28108.50', 874], ['28089.75', 1033],
      ['1534', 1078], ['767', 1106], ['0', 1134], ['-767', 1161], ['-1534', 1190], ['-2302', 1207],
      ['316', 1252], ['158', 1281], ['0 ', 1310], ['-158', 1339], ['-316', 1368], ['-475', 1387]].map(([t, y]) => (
      <g key={t}>
        <Label f={F} x={1177} y={y}>{t}</Label>
        <Box f={F} x1={1170} x2={1175} y1={Number(y) - 1} y2={Number(y) + 1} fill="#222" />
      </g>
    ))}
    <rect x={13} y={1697.5} width={2179} height={3} fill="#808080" />
    <rect x={13} y={1804} width={2179} height={3} fill="#808080" />
    <Tag f={F} x1={1199} x2={1305} y1={27} y2={51} fill="#d3d3d3">28201.75</Tag>
    <Tag f={F} x1={1170} x2={1300} y1={414} y2={446} fill="#f00" stroke="#a00" color="#fff" size={15.5} bold>28157.25</Tag>
    {[['669678', 1158, 1153, '#2828ff'], ['1324597', 1178, 1165, '#2828ff'], ['654853', 1198, 1153, '#f01414'],
      ['3464', 1338, 1166, '#2828ff'], ['6766', 1357, 1166, '#2828ff'], ['3302', 1377, 1166, '#f01414']].map(([t, y, x, c]) => (
      <Label key={t} f={F} x={x} y={y} fill={c} anchor="end">{t}</Label>
    ))}
    <Times f={D} y={1415} tick={1394} data={[['12:15', 255], ['12:21', 383], ['12:27', 553], ['12:33', 760], ['12:39', 915], ['12:45', 1077], ['12:54', 1258], ['13:00', 1376]]} />
    <Times f={E} y={1415} tick={1394} data={[['13:09', 16], ['13:18', 188], ['13:27', 352], ['13:33', 484], ['13:42', 624], ['13:51', 768], ['14:00', 921], ['14:06', 1052], ['14:12', 1160], ['14:21', 1298], ['14:27', 1397], ['14:36', 1504]]} />
    <Times f={F} y={1415} tick={1394} data={[['14:48', 132], ['14:54', 252], ['15:00', 341], ['15:09', 481], ['15:15', 586], ['15:24', 722], ['15:33', 857], ['15:39', 951], ['15:45', 1028]]} />
    <Label f={F} x={1028} y={1435} anchor="middle">05/05</Label>
    <rect x={1242} y={1076} width={1.2} height={838} fill="#111" />
    <Tag f={E} x1={1037} x2={1180} y1={1428} y2={1451} fill="#d3d3d3">05/05 14:03</Tag>
  </svg>
)

/* ---------- market profile ---------- */

// text, y, grey bar end, colour
type Tpo = [string, number, number, string?]

const R = '#f01428'
const M = '#f01ef0'
const GN = '#1e8c1e'
const BL = '#2314f0'

const Profile = ({ f, x, rows, h }: { f: Frame; x: number; rows: Tpo[]; h: number }) => (
  <>
    {rows.map(([, y, end], i) => end > 0 && <Box key={i} f={f} x1={x} x2={end} y1={y - h / 2} y2={y + h / 2} fill="#c0c0c0" />)}
    {rows.map(([t, y, , c], i) => (
      <text
        key={i}
        x={px(f, x)}
        y={py(f, y) + 4.3}
        fontSize={11.7}
        fontWeight={700}
        letterSpacing={0.2}
        fill={c || '#111'}
        fontFamily={'"DejaVu Sans", Verdana, sans-serif'}
        xmlSpace="preserve"
      >
        {t.split('').map((ch, j) => (
          <React.Fragment key={j}>
            {ch === 'I' || ch === 'J' ? <tspan fontFamily={'"DejaVu Sans Mono", monospace'}>{ch}</tspan> : ch}
            {' '}
          </React.Fragment>
        ))}
      </text>
    ))}
  </>
)

const ES_1: Tpo[] = [
  ['F', 809, 0, R], ['F', 833, 0, R], ['F', 857, 0, R], ['F', 881, 0], ['G', 905, 0], ['G', 929, 0], ['FG', 953, 232],
  ['FGJ', 977, 234], ['FGJ', 1001, 278], ['FGIJK', 1025, 292], ['FGIJK', 1049, 250], ['GIJKMN', 1073, 284],
  ['GHIKMN', 1097, 378], ['GHIKLMN', 1121, 413], ['HIKLMN', 1146, 424, M], ['IKLMN', 1170, 302, GN], ['IKLMN', 1194, 216],
  ['LMN', 1218, 0], ['LMN', 1242, 0], ['N', 1266, 192], ['N', 1290, 192], ['N', 1314, 210],
]

const ES_2: Tpo[] = [
  ['T', 1025, 0, R], ['T', 1049, 0, R], ['T', 1073, 473, R], ['T', 1097, 476, R], ['Tim', 1121, 482, R], ['Tijmn', 1146, 584, R],
  ['Tghijkmn', 1170, 476, R], ['TVeghijkmn', 1194, 774, R], ['TVWabcdefghijklmns', 1218, 476, R],
  ['TVWYZabcdefghiklmnrs', 1242, 848], ['TVWXYZabcdefgklmnpqrst', 1266, 922], ['TVWXYZabcdfklmpqrst', 1290, 916],
  ['TWXYZabcdlmpqrt', 1314, 835], ['WXYZabcdlmpqrt', 1338, 725], ['XYZalmpt', 1362, 595], ['YZpt', 1386, 576], ['YptyA', 1410, 540],
]

const ES_3: Tpo[] = [
  ['D', 1170, 0, R], ['D', 1194, 1300, R], ['D', 1218, 1283, R], ['CD', 1242, 1273, R], ['CD', 1266, 1295, R], ['CDE', 1290, 1240, R],
  ['CDE', 1314, 1308, R], ['CDE', 1338, 1320, R], ['CDE', 1362, 1240, R], ['BCDE', 1386, 1235, R], ['BCE', 1410, 1306, R],
]

const ES_4: Tpo[] = [
  ['y', 950, 0, R], ['yA', 988, 395, R], ['yzA', 1027, 533, R], ['yzA', 1068, 620], ['yzA', 1108, 511], ['vyzA', 1147, 517],
  ['vyz', 1188, 420], ['vxy', 1228, 407], ['psvxy', 1268, 510], ['npqstvwxy', 1307, 550],
]

const ES_5: Tpo[] = [
  ['M', 147, 770, R], ['MN', 188, 838, R], ['KMN', 228, 795, R], ['KLMN', 268, 852, R], ['KLMN', 308, 840, R], ['JKLM', 348, 838, R],
  ['JKL', 388, 822], ['JK', 428, 768], ['GIJ', 468, 818], ['CEGHIJ', 508, 820], ['CEFGHI', 548, 1001], ['CDEFGHI', 587, 1018, M],
  ['CDEFGHI', 627, 935, GN], ['CDEFGI', 667, 995], ['CDEFG', 707, 880], ['BCD', 747, 868], ['BCD', 787, 923], ['BCD', 827, 900],
  ['BCD', 867, 887], ['BC', 907, 918], ['BC', 947, 894], ['BC', 987, 795, BL], ['BC', 1027, 783, BL], ['B', 1067, 752, BL], ['B', 1107, 0, BL],
]

const NQ_1: Tpo[] = [
  ['A', 1060, 0, R], ['yA', 1095, 303, R], ['yA', 1130, 397, R], ['yzA', 1165, 603, R], ['yzA', 1200, 525], ['yzA', 1235, 541], ['yzA', 1270, 360],
]

const NQ_2: Tpo[] = [
  ['KM', 117, 688, R], ['KLM', 152, 787, R], ['KLM', 187, 860, R], ['JKLMN', 222, 815, R], ['JKLMN', 257, 806], ['GJKLN', 292, 738],
  ['FGIJN', 326, 787], ['DEFGIJ', 361, 840], ['CDEFGHIJ', 396, 902], ['CDEFGHI', 431, 995, '#a01e32'], ['CDEFGHI', 466, 928],
  ['CDEFGHI', 501, 815], ['BCDEFGHI', 536, 810], ['BCDEGH', 570, 884], ['BCDEGH', 605, 950], ['BCDEGH', 640, 856], ['BCD', 676, 810],
  ['BCD', 711, 785, GN], ['BC', 746, 764], ['BC', 781, 757], ['BC', 816, 777], ['BC', 850, 786, BL], ['BC', 885, 740, BL],
  ['BC', 920, 722, BL], ['BC', 955, 690, BL], ['B', 990, 707, BL], ['B', 1025, 707, BL], ['B', 1060, 702, BL], ['B', 1095, 700, BL],
  ['B', 1130, 706, BL], ['B', 1165, 700, BL], ['B', 1199, 690, BL], ['B', 1235, 685, BL], ['B', 1270, 700, BL],
]

const ES_RIGHT = [
  1240, 1224, 1190, 1200, 1202, 1190, 1206, 1190, 1204, 1200, 1229, 1216, 1210, 1207, 1167, 1112, 1125, 1115, 1131, 1102, 1131,
  1161, 1165, 1115, 1102, 1099, 1095, 1102, 1119, 1108, 1131, 1170, 1165, 1166, 1149, 1142, 1152, 1135, 1152, 1170, 1174, 1197,
  1170, 1170, 1170, 1158,
]

const ES_LEFT = [
  698, 30, 712, 45, 720, 70, 726, 58, 733, 76, 745, 50, 770, 62, 790, 78, 800, 55, 810, 66, 825, 56, 840, 68, 860, 38, 875, 34, 890, 58,
  905, 62, 920, 48, 928, 85, 940, 125, 948, 150, 958, 120, 970, 150, 985, 112, 1000, 128, 1012, 100, 1016, 152, 1022, 110, 1030, 90, 1045, 85,
  1060, 88, 1075, 92, 1085, 80, 1095, 110, 1105, 85, 1130, 85, 1150, 88, 1165, 95, 1177, 118, 1190, 75, 1205, 60, 1220, 58, 1240, 48,
  1255, 62, 1270, 50, 1285, 30, 1300, 38, 1320, 35, 1345, 42, 1360, 28, 1380, 44, 1400, 52, 1420, 55, 1440, 48,
]

const NQ_RIGHT = [
  92, 1230, 104, 1224, 116, 1207, 128, 1183, 140, 1168, 152, 1165, 163, 1150, 175, 1129, 186, 1155, 198, 1179, 209, 1165, 221, 1170,
  233, 1175, 245, 1195, 256, 1205, 270, 1212, 281, 1205, 292, 1194, 304, 1190, 316, 1166, 330, 1168, 345, 1142, 357, 1148, 372, 1132,
  384, 1128, 395, 1095, 407, 1092, 418, 1070, 432, 1077, 445, 1110, 457, 1103, 470, 1145, 482, 1165, 495, 1172, 515, 1175, 530, 1165,
  550, 1145, 562, 1120, 575, 1105, 590, 1090, 603, 1112, 620, 1137, 640, 1158, 660, 1168, 680, 1190, 700, 1185, 720, 1183, 745, 1200,
  780, 1188, 820, 1173, 850, 1184, 880, 1205, 910, 1212, 940, 1225, 965, 1215, 1000, 1220, 1040, 1217, 1080, 1222, 1110, 1207,
  1140, 1200, 1157, 1177, 1170, 1190, 1185, 1200, 1210, 1203, 1230, 1204, 1250, 1218, 1270, 1229, 1298, 1229,
]

const lerp = (pts: number[], y: number) => {
  for (let i = 0; i + 3 < pts.length; i += 2) {
    if (y <= pts[i + 2]) {
      const t = (y - pts[i]) / (pts[i + 2] - pts[i])
      return pts[i + 1] + t * (pts[i + 3] - pts[i + 1])
    }
  }
  return pts[pts.length - 1]
}

const range = (from: number, to: number, step: number) => {
  const out: number[] = []
  for (let v = from; v < to; v += step) out.push(v)
  return out
}

const VLine = ({ f, x, y1, y2, color, w = 2 }: any) => (
  <line x1={px(f, x)} x2={px(f, x)} y1={py(f, y1)} y2={py(f, y2)} stroke={color} strokeWidth={w} />
)

const Stamp = ({ f, x, y, a, b }: any) => (
  <>
    <Label f={f} x={x} y={y}>{a}</Label>
    <text x={px(f, x)} y={py(f, y) + 17} fontSize={13} fill="#111" fontFamily={SANS}>{b}</text>
  </>
)

const CREAM = '#fffaf0'
const BAND = '#afeeea'

const EsChart = () => (
  <svg width={1019} height={844} viewBox="2329 176 1019 844" className="block">
    <rect x={2329} y={176} width={1019} height={844} fill="#fff" />
    <rect x={2329} y={176} width={950} height={809} fill={CREAM} />
    {[[521, 596], [683, 735.6], [783.6, 851], [925, 984.7]].map(([a, b]) => (
      <rect key={a} x={2383.5} y={a} width={830.5} height={b - a} fill={BAND} />
    ))}
    <text x={2360} y={245} fontSize={39} fontWeight={700} fill="#dcd7d2" fontFamily={UI} textLength={45}>F2</text>
    {[['7302.25', 677], ['7294.50', 772], ['7285.25', 949], ['7281.75', 1005], ['7267.50', 1200], ['7259.75', 1358], ['7253.50', 1427]].map(([t, y]) => (
      <Label key={t} f={G} x={174} y={y}>{t}</Label>
    ))}
    <Box f={G} x1={166} x2={197} y1={752} y2={773} fill="#c0c0c0" />
    <Box f={G} x1={166} x2={234} y1={990} y2={1014} fill="#c0c0c0" />
    <VLine f={G} x={54} y1={686} y2={926} color="#f00" />
    <VLine f={G} x={54} y1={1195} y2={1355} color="#f00" />
    {range(698, 1440, 3.4).map((y, i) => {
      const end = lerp(ES_LEFT, y) + ((i * 7) % 5) * 2 - 5
      const edge = y < 872 || y > 1272
      return (
        <g key={i}>
          <Box f={G} x1={22} x2={end} y1={y} y2={y + 3.4} fill={edge ? '#b85a00' : '#a08c00'} />
          <Box f={G} x1={22} x2={end + 1} y1={y} y2={y + 1.5} fill={i % 2 ? '#221800' : edge ? '#803c00' : '#6e6000'} />
        </g>
      )
    })}
    <Box f={G} x1={22} x2={153} y1={1015} y2={1018} fill="#400040" />

    <Profile f={G} x={166} rows={ES_1} h={20} />
    <Profile f={G} x={457} rows={ES_2} h={20} />
    <Profile f={G} x={1214} rows={ES_3} h={20} />
    <Profile f={H} x={333} rows={ES_4} h={34} />
    <Profile f={H} x={745} rows={ES_5} h={34} />
    <VLine f={G} x={421} y1={880} y2={1310} color="#f08070" />
    <VLine f={G} x={447} y1={1022} y2={1300} color="#f00" />
    <VLine f={G} x={1178} y1={1242} y2={1441} color="#f08070" />
    <VLine f={G} x={1204} y1={1227} y2={1441} color="#f00" />
    <VLine f={H} x={734} y1={486} y2={1070} color="#f00" />
    <VLine f={H} x={1022} y1={386} y2={943} color="#f08070" />
    <VLine f={H} x={704} y1={1063} y2={1356} color="#f08070" />
    <polygon points="2484,762 2490,768 2484,774" />
    <polygon points="3200,575.5 3206,569 3206,582" />
    <polygon points="3094,854 3099,848 3104,854 3099,860" />
    {ES_RIGHT.map((s, i) => (
      <Box key={i} f={H} x1={s} x2={1256} y1={132 + i * 26.65} y2={158.65 + i * 26.65} fill="#f00" stroke="#400" />
    ))}

    <rect x={2329} y={185.5} width={1019} height={1.2} fill="#222" />
    <rect x={3278} y={176} width={1.2} height={809} fill="#222" />
    <rect x={2329} y={984} width={950} height={1.2} fill="#222" />
    <rect x={3175} y={176} width={1.2} height={809} fill="#111" />
    {[['7324.25', -526], ['7310.25', -148], ['7296.00', 229], ['7281.75', 605], ['7267.75', 980], ['7253.50', 1343]].map(([t, y]) => (
      <g key={t}>
        <Label f={H} x={1271} y={y}>{t}</Label>
        <Box f={H} x1={1257} x2={1268} y1={Number(y) - 1} y2={Number(y) + 2} fill="#222" />
      </g>
    ))}
    <rect x={3296.5} y={186.5} width={51} height={14} fill="#d3d3d3" stroke="#222" />
    <text x={3299} y={198.5} fontSize={13} fill="#222" fontFamily={SANS}>7337.50</text>
    <Stamp f={G} x={64} y={1457} a="09:30" b="05/01" />
    <Stamp f={G} x={457} y={1457} a="18:00" b="05/03" />
    <Stamp f={G} x={1214} y={1457} a="09:30" b="05/04" />
    <Stamp f={H} x={333} y={1383} a="18:00" b="05/04" />
    <Stamp f={H} x={745} y={1383} a="09:30" b="05/05" />
    <Tag f={H} x1={946} x2={1154} y1={1416} y2={1452} fill="#d3d3d3">05/05 14:00</Tag>
  </svg>
)

const NqChart = () => (
  <svg width={1019} height={885} viewBox="2329 1063 1019 885" className="block">
    <rect x={2329} y={1063} width={1019} height={885} fill="#fff" />
    <rect x={2329} y={1063} width={942} height={850} fill={CREAM} />
    <rect x={2384} y={1886.5} width={821} height={26} fill={BAND} />
    <text x={2362} y={1133} fontSize={39} fontWeight={700} fill="#dcd7d2" fontFamily={UI} textLength={45}>F2</text>
    <text x={2389} y={1901} fontSize={13} fill="#111" fontFamily={SANS}>27974.00</text>
    <Profile f={I} x={268} rows={NQ_1} h={31} />
    <Profile f={I} x={680} rows={NQ_2} h={31} />
    <VLine f={I} x={670} y1={386} y2={1257} color="#f00" />
    <VLine f={I} x={997} y1={258} y2={812} color="#f08070" />
    <VLine f={I} x={640} y1={1197} y2={1304} color="#f08070" />
    <polygon points="3192,1485.5 3199,1478 3199,1493" />
    <polygon points="3072,1855.5 3077,1850 3082,1855.5 3077,1861" />
    {range(92, 1298, 11.6).map((y, i) => (
      <Box key={i} f={I} x1={lerp(NQ_RIGHT, y)} x2={1234} y1={y} y2={y + 11.6} fill="#f00" stroke="#400" />
    ))}
    <rect x={3270.5} y={1063} width={1.2} height={850} fill="#222" />
    <rect x={2329} y={1912} width={942} height={1.2} fill="#222" />
    <rect x={2384} y={1063} width={1.2} height={850} fill="#111" />
    <rect x={2329} y={1320.5} width={1019} height={1.2} fill="#222" />
    {[['28284.75', -426], ['28220.25', -78], ['28155.75', 269], ['28091.25', 616], ['28026.75', 963], ['27962.25', 1295]].map(([t, y]) => (
      <g key={t}>
        <Label f={I} x={1246} y={y}>{t}</Label>
        <Box f={I} x1={1234} x2={1243} y1={Number(y) - 1} y2={Number(y) + 2} fill="#222" />
      </g>
    ))}
    <rect x={3288.5} y={1320.5} width={59} height={14} fill="#d3d3d3" stroke="#222" />
    <text x={3290} y={1332} fontSize={13} fill="#222" fontFamily={SANS}>28232.75</text>
    <Stamp f={I} x={-1343} y={1330} a="09:30" b="05/01" />
    <Stamp f={I} x={-813} y={1330} a="18:00" b="05/03" />
    <Stamp f={I} x={-257} y={1330} a="09:30" b="05/04" />
    <Stamp f={I} x={268} y={1330} a="18:00" b="05/04" />
    <Stamp f={I} x={680} y={1330} a="09:30" b="05/05" />
    <Tag f={I} x1={-1427} x2={-1218} y1={1359} y2={1391} fill="#d3d3d3">05/04 08:00</Tag>
  </svg>
)

/* ---------- windows ---------- */

const Buttons = () => (
  <svg width={112} height={14} viewBox="0 0 112 14" fill="none" stroke="#8a8a8a" strokeWidth={1.2}>
    <path d="M0 7h10" />
    <rect x={50.5} y={2.5} width={9} height={9} rx={1} />
    <path d="M101 2l10 10M111 2l-10 10" />
  </svg>
)

const TitleBar = ({ title, className }: { title: string; className: string }) => (
  <div className={`flex shrink-0 items-center justify-between bg-[#f1f2f4] pl-2 ${className}`}>
    <div className="flex items-center gap-[7px]">
      <div className="flex h-3 w-4 border border-[#a0a0a0] bg-white p-px">
        <div className="h-full w-2 bg-[#4d8a78]" />
      </div>
      <span className="text-[12.9px] leading-4 text-[#8c8c8c]">{title}</span>
    </div>
    <Buttons />
  </div>
)

const ScrollBar = ({ className }: { className: string }) => (
  <div className={`flex shrink-0 items-center justify-between bg-[#efefef] pl-1.5 text-[#8a8a8a] ${className}`}>
    <svg width={6} height={9} viewBox="0 0 6 9" fill="none" stroke="#8a8a8a">
      <path d="M5 1L1 4.5 5 8" />
    </svg>
    <div className="flex h-full items-center gap-[7px]">
      <div className="h-full w-2 bg-[#cfcfcf]" />
      <svg width={6} height={9} viewBox="0 0 6 9" fill="none" stroke="#8a8a8a">
        <path d="M1 1l4 3.5L1 8" />
      </svg>
    </div>
  </div>
)

const Btn = ({ children, className }: any) => (
  <div className={`flex w-[121px] shrink-0 items-center justify-center border border-[#2a1a50] pt-[2px] font-bold ${className}`}>
    {children}
  </div>
)

const Steps = () => (
  <div className="flex h-full w-5 flex-col items-center justify-center bg-[#d6d6d6] text-[10px] leading-[9px] text-black">
    <span>+</span>
    <span>−</span>
  </div>
)

interface IPanel {
  pnl: string
  count: string
  symbol: string
  values: string[]
}

const OrderPanel = ({ pnl, count, symbol, values }: IPanel) => (
  <div className="flex w-[131px] shrink-0 flex-col bg-[#9370db] pl-[5px] pt-[5px] text-[13.5px] leading-none">
    <Btn className="h-[33px] bg-white text-[15px]">Flat</Btn>
    <Btn className="mt-[5px] h-[23px] bg-white">0</Btn>
    <Btn className="mt-[5px] h-[24px] bg-white text-[15px]">{pnl}</Btn>
    <Btn className="mt-[6px] h-[34px] bg-[#00008b] text-white">Buy Market</Btn>
    <Btn className="mt-[6px] h-[24px] bg-[#00008b] text-white">Buy Bid</Btn>
    <Btn className="mt-[9px] h-[23px] bg-[#8b0000] text-white">Sell Ask</Btn>
    <Btn className="mt-[5px] h-[33px] bg-[#8b0000] text-white">Sell Market</Btn>
    <Btn className="mt-[10px] h-[33px] bg-[#8b0000] text-white">Flatten</Btn>
    <Btn className="mt-[6px] h-[33px] bg-[#8b0000] text-white">Cancel All</Btn>
    <Btn className="mt-[13px] h-[24px] bg-white">Center</Btn>
    <div className="mt-[7px] flex h-[24px] w-[121px] gap-px">
      <div className="flex w-[60px] bg-white">
        <span className="flex flex-1 items-center justify-center pt-px text-[13px] font-bold">1</span>
        <Steps />
      </div>
      <div className="flex flex-1 items-center justify-center border border-black bg-white pt-px text-[#333]">{count}</div>
    </div>
    <div className="mt-[2px] grid h-[44px] w-[121px] grid-cols-2 gap-px border border-black bg-black text-[#333]">
      {['NP', 'CLR', '1', '2'].map((t) => (
        <div key={t} className="flex items-center justify-center bg-white pt-px">
          {t}
        </div>
      ))}
    </div>
    <div className="mt-[9px] flex h-[23px] w-[120px] items-center justify-between border border-[#c4c4c4] bg-[#e8e8e8] pl-1.5 pr-1 text-[#222]">
      {'ac138753'}
      <svg width={7} height={5} viewBox="0 0 7 5" fill="none" stroke="#444">
        <path d="M.5.5l3 3 3-3" />
      </svg>
    </div>
    <div className="mt-[6px] h-[14px] font-bold">{symbol}</div>
    <div className="mt-[18px] flex w-[120px] flex-col gap-[3.5px] pl-[6px] text-[#2a1a40]">
      {['Target', 'Stop', 'BE at', 'BE +', 'Trail'].map((t, i) => (
        <div key={t} className="flex h-[22.7px] items-center justify-between text-[13px]">
          <span>{t}</span>
          <div className="flex h-full w-[59px] bg-white">
            <span className="flex flex-1 items-center justify-center text-[12px] text-[#222]">{values[i]}</span>
            <Steps />
          </div>
        </div>
      ))}
    </div>
  </div>
)

/* ---------- taskbar ---------- */

const Task = ({ children }: any) => (
  <svg width={26} height={26} viewBox="0 0 26 26" className="shrink-0">
    {children}
  </svg>
)

const Copilot = () => (
  <>
    <path d="M9 1h7c2 0 3 1 3.500 3l1 4h-5c-2 0-3 1-3.500 3l-2.500 9H4c-3 0-4-2-3.300-5L4 5c.8-2.500 2.500-4 5-4z" fill="#2a9df4" />
    <path d="M9 1h3c-2 1-3 3-4 6l-4 13c-3 0-4-2-3.300-5L4 5c.8-2.500 2.500-4 5-4z" fill="#3fc48d" />
    <path d="M17 25h-7c-2 0-3-1-3.500-3l-1-4h5c2 0 3-1 3.500-3l2.500-9H22c3 0 4 2 3.300 5L22 21c-.8 2.500-2.500 4-5 4z" fill="#c956d8" />
    <path d="M17 25h-7c4 0 5-3 6-6l2-7h7l-3 9c-.8 2.500-2.500 4-5 4z" fill="#f78a4c" />
  </>
)

const TaskBar = () => (
  <div className="flex h-[52px] w-[3352px] shrink-0 items-center bg-[#22252d] pb-[2px] text-white">
    <div className="flex w-[1205px] shrink-0 items-center gap-2 pl-[22px]">
      <svg width={26} height={24} viewBox="0 0 26 24">
        <circle cx={19} cy={9} r={7} fill="#f5a02a" />
        <path d="M6 22a5 5 0 01-.5-10 7 7 0 0113-1A5.600 5.600 0 0120 22z" fill="#c3d5f2" />
      </svg>
      <div className="text-[13px] leading-[17px]">
        <div>64°F</div>
        <div className="text-[#c4c6ca]">Mostly cloudy</div>
      </div>
    </div>
    <Task>
      <path d="M0 0h12.400v12.400H0zM13.600 0H26v12.400H13.600zM0 13.600h12.400V26H0zM13.600 13.600H26V26H13.600z" fill="#4cc2ff" />
    </Task>
    <div className="ml-[14px] flex h-[34px] w-[239px] shrink-0 items-center justify-between rounded-full bg-[#f1f2f3] pl-3 pr-1.5">
      <div className="flex items-center gap-3 text-[14px] text-[#5c5c5c]">
        <svg width={17} height={17} viewBox="0 0 17 17" fill="none" stroke="#222" strokeWidth={1.8}>
          <circle cx={7} cy={7} r={5.500} />
          <path d="M11 11l5 5" />
        </svg>
        Search
      </div>
      <svg width={50} height={22} viewBox="0 0 50 22">
        <path d="M1 18l4-11 9-6 8 2-2 8-3 7-6 2z" fill="#d01420" />
        <path d="M4 15l12-9M7 18l11-9" stroke="#7a0610" />
        <path d="M27 3l8-2 5 5 5 1 4 9-3 5-7-2-6-6-4 5-3-4z" fill="#1f9a36" />
        <path d="M30 8l9 9M35 4l10 14" stroke="#f2c21a" strokeWidth={1.5} />
      </svg>
    </div>
    <div className="ml-[14px] flex items-center gap-[22px]">
      <Task>
        <rect x={8} y={1} width={18} height={17} fill="#f2f2f2" />
        <rect x={0} y={8} width={18} height={17} fill="#8b8b8b" />
        <rect x={8} y={8} width={10} height={10} fill="#c4c4c4" />
      </Task>
      <Task><Copilot /></Task>
      <Task>
        <circle cx={17} cy={5} r={4} fill="#7b83eb" />
        <circle cx={23} cy={7} r={2.500} fill="#5059c9" />
        <rect x={10} y={9} width={15} height={14} rx={5} fill="#7b83eb" />
        <rect x={1} y={6} width={13} height={13} rx={1.500} fill="#4b53bc" />
        <text x={7.500} y={16.500} fontSize={11} fontWeight={700} fill="#fff" textAnchor="middle" fontFamily={UI}>T</text>
      </Task>
      <Task>
        <path d="M0 2h9l3 3h14v19H0z" fill="#e8a820" />
        <path d="M0 8h26v16H0z" fill="#ffd75e" />
        <path d="M5 18h16v7H5z" fill="#1a7fd4" />
      </Task>
      <Task>
        <path d="M8 6V1.500h10V6" fill="none" stroke="#2aa5f0" strokeWidth={2} />
        <rect x={0.500} y={5} width={25} height={21} rx={3} fill="#f4f4f4" />
        <path d="M8 10h4.500v4.500H8z" fill="#f25022" />
        <path d="M13.500 10H18v4.500h-4.500z" fill="#7fba00" />
        <path d="M8 15.500h4.500V20H8z" fill="#00a4ef" />
        <path d="M13.500 15.500H18V20h-4.500z" fill="#ffb900" />
      </Task>
      <Task>
        <path d="M5 9l11-8 10 8v14H5z" fill="#1066b5" />
        <path d="M6 12l10 6 10-7v12a2 2 0 01-2 2H8a2 2 0 01-2-2z" fill="#35b8f1" />
        <rect x={0} y={7} width={14} height={13} rx={2} fill="#0f6cbd" />
        <circle cx={7} cy={13.500} r={3.500} fill="none" stroke="#fff" strokeWidth={1.800} />
      </Task>
      <Task>
        <path d="M9 3L2.500 7v12L9 23M17 3l6.500 4v12L17 23M13 .8l3 1.700M13 25.200l-3-1.700" fill="none" stroke="#f0f0f0" strokeWidth={2} />
        <path d="M13 6.500l5.500 3.200v6.600L13 19.500l-5.500-3.200V9.700zM7.500 9.700L13 13l5.500-3.300M13 13v6.500" fill="none" stroke="#f0f0f0" strokeWidth={1.700} />
      </Task>
      <Task>
        <Copilot />
        <rect x={10} y={17} width={16} height={9} fill="#111" />
        <text x={18} y={24.500} fontSize={7} fontWeight={700} fill="#fff" textAnchor="middle" fontFamily={UI}>M365</text>
      </Task>
      <Task>
        <rect x={0} y={3} width={26} height={20} fill="#cfeafb" />
        <circle cx={9} cy={11} r={5.500} fill="#1c7fd0" />
        <path d="M9 11V5.500a5.500 5.500 0 015.500 5.500z" fill="#f59b23" />
        <path d="M17 8h6M17 12h6M4 19h18" stroke="#1c7fd0" strokeWidth={2} />
      </Task>
      <Task>
        <circle cx={13} cy={13} r={12.500} fill="#1b86cf" />
        <path d="M1 12C2 4 8 .5 13 .5c7 0 12.500 5 12.500 10 0 4-3 6-6.500 6-2 0-3-.8-3-1.600 0-.9 1-1.300 1-3 0-2.500-3-4-6-4-4 0-8 1.600-10 4z" fill="#45d08c" />
        <path d="M10 10c-3 3-3 13 6 15 3-.3 6-2.200 8-5-5 2.500-12 0-14-10z" fill="#0c4c94" />
      </Task>
      <Task>
        <path d="M19 0l7 3v20l-7 3L7 15l-4.500 4L0 17.500v-9L2.500 7 7 11zM19 8l-6.500 5 6.500 5z" fill="#a470d8" fillRule="evenodd" />
      </Task>
      <div className="relative -mx-2 flex h-[43px] w-[42px] items-center justify-center rounded bg-[#2d3038]">
        <div className="flex h-[26px] w-[26px] items-center justify-center rounded-full bg-[#0b5cff] text-[7.5px] font-bold leading-none">
          zoom
        </div>
        <div className="absolute bottom-0 left-3 h-[3px] w-[18px] rounded-full bg-[#4cc2ff]" />
      </div>
      <div className="relative h-[26px]">
        <Task>
          <rect x={1} y={1} width={24} height={24} rx={2} fill="#2668b0" />
          <path d="M1 22L13 8l12 15v2H1z" fill="#5fc8f8" />
          <circle cx={19} cy={6} r={2} fill="#fff" />
        </Task>
        <div className="absolute -bottom-[9px] left-[10px] h-[4px] w-[6px] rounded-full bg-[#9a9ca0]" />
      </div>
      <div className="relative h-[26px]">
        <Task>
          <path d="M2 1h14c8 0 8 9 2 10.500C25 13 25 25 14 25H10c-5 0-7-3-7-6 0-4 4-6 9-6-3 1-5 3-4 5s6 3 8 0c1.500-3-1-5-4-5H2l5-4h7c3 0 3-4 0-4H6z" fill="#7cc4ea" />
          <path d="M3 19c0-4 4-6 9-6-3 1-5 3-4 5s6 3 8 0l6 3c-2 3-5 4-8 4h-4c-5 0-7-3-7-6z" fill="#3d8fd0" />
        </Task>
        <div className="absolute -bottom-[9px] left-[10px] h-[4px] w-[6px] rounded-full bg-[#9a9ca0]" />
      </div>
    </div>
    <div className="ml-auto flex items-center pr-[20px]">
      <svg width={140} height={20} viewBox="0 0 140 20" fill="none" stroke="#f0f0f0" strokeWidth={1.500}>
        <path d="M1 13l5.500-5.500L12 13" />
        <path d="M34 14a4.500 4.500 0 011-8.500 6 6 0 0111 1c3 0 5 7 1 7.500z" fill="#cdd3d8" stroke="none" />
        <circle cx={47} cy={13.500} r={5.500} fill="#0f78d4" stroke="none" />
        <path d="M47 12.500v4M47 10v1.200" />
        <rect x={74} y={2} width={6} height={10} rx={3} stroke="#8fd4e0" />
        <path d="M71.500 9.500a5.500 5.500 0 0011 0M77 15v4" stroke="#8fd4e0" />
        <path d="M117 10v6h-14V3h9M106 19h8" />
        <rect x={114.500} y={2} width={4.500} height={6} />
        <path d="M130 8v5h3l4 3.500v-12L133 8z" />
        <path d="M138.500 8q1.500 2.500 0 5" />
      </svg>
      <div className="ml-[18px] text-right text-[13.5px] leading-[17.500px] text-[#f0f0f0]">
        <div>12:45 PM</div>
        <div>5/5/2026</div>
      </div>
      <svg width={18} height={18} viewBox="0 0 18 18" className="ml-2" fill="none" stroke="#f0f0f0" strokeWidth={1.500}>
        <path d="M10 2.500A5 5 0 004 8v4l-2 2h13l-1.500-2v-1M7 16h3M8 7h3l-3 4h3M13 2h3l-3 4h3" />
      </svg>
    </div>
  </div>
)

const Person = () => (
  <svg width={270} height={270} viewBox="0 0 270 270" className="block bg-[#fffffa]">
    <path d="M8 270v-15C10 219 45 193 92 182q43 27 88 0c47 11 81 37 83.500 73v15z" fill="#d4d4ca" />
    <circle cx={135} cy={121.5} r={54.7} fill="#d4d4ca" />
  </svg>
)

export default function App() {
  return (
    <div className="flex h-[2160px] w-[3840px] overflow-hidden bg-black font-['Open_Sans','Noto_Sans',sans-serif]">
      <div className="flex w-[3360px] shrink-0 flex-col pl-[4px] pt-[136px]">
        <div className="flex h-[1832px] w-[3352px] gap-[1px] bg-[#555c69] pl-[9px] pt-2">
          <div className="flex w-[2315px] shrink-0 flex-col">
            <div className="flex h-[918px] w-[2314px] shrink-0 flex-col overflow-hidden rounded-lg">
              <TitleBar title="3m0s(165), CME/MESM26" className="h-8 pr-[21px]" />
              <div className="flex flex-1">
                <div className="flex w-[2183px] shrink-0 flex-col bg-white">
                  <MesChart />
                  <ScrollBar className="h-[18px] pr-[8px]" />
                </div>
                <OrderPanel pnl="0.00" count="0" symbol="L MESM26" values={['0', '20', '12', '1', '0']} />
              </div>
            </div>
            <div className="flex h-[905px] w-[2316px] shrink-0 flex-col overflow-hidden rounded-b-lg">
              <div className="h-[13px] shrink-0 border-t-2 border-[#c8c8c8] bg-[#f1f2f4]" />
              <div className="flex flex-1">
                <div className="flex w-[2185px] shrink-0 flex-col bg-white">
                  <MnqChart />
                  <ScrollBar className="h-[19px] pr-[6px]" />
                </div>
                <OrderPanel pnl="7.50" count="4" symbol="L MNQM26" values={['0', '80', '40', '3', '0']} />
              </div>
            </div>
          </div>
          <div className="flex w-[1019px] shrink-0 flex-col">
            <div className="flex h-[888px] shrink-0 flex-col overflow-hidden rounded-t-lg">
              <TitleBar title="F2 30m0s(884), CME/ESM26" className="h-8 pr-[21px]" />
              <EsChart />
              <ScrollBar className="h-[12px] pr-[6px]" />
            </div>
            <div className="flex h-[935px] shrink-0 flex-col overflow-hidden rounded-lg">
              <TitleBar title="F2 30m0s(885), CME/NQM26" className="h-[31px] pr-[21px]" />
              <NqChart />
              <ScrollBar className="h-[19px] pr-[6px]" />
            </div>
          </div>
        </div>
        <TaskBar />
      </div>
      <div className="flex w-[480px] shrink-0 flex-col pt-[540px]">
        <div className="flex h-[1080px] flex-col items-center bg-[#1c1c1c]">
          <Person />
          <Person />
          <Person />
          <Person />
        </div>
      </div>
    </div>
  )
}
